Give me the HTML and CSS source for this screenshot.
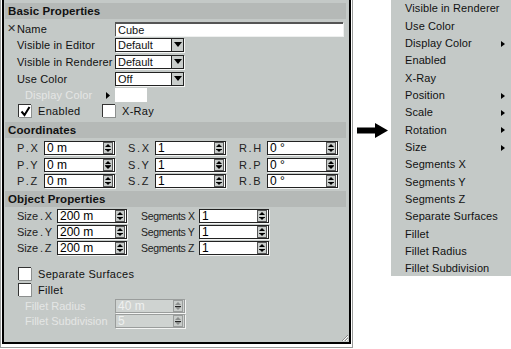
FILE: index.html
```html
<!DOCTYPE html>
<html>
<head>
<meta charset="utf-8">
<link rel="stylesheet" href="styles.css">
</head>
<body>
<div class="stage">
  <div class="frame">
    <div class="panel">
      <div class="band">Basic Properties</div>
      <div class="basic">
        <div class="lbl lbl-name"><span class="xmark">✕</span>Name</div>
        <div class="field name-field"><span class="ftxt">Cube</span></div>

        <div class="lbl">Visible in Editor</div>
        <div class="select"><span class="sel-val">Default</span><span class="sel-btn"><svg width="8" height="5" viewBox="0 0 8 5"><path d="M0 0H8L4 5Z" fill="#000"/></svg></span></div>

        <div class="lbl">Visible in Renderer</div>
        <div class="select"><span class="sel-val">Default</span><span class="sel-btn"><svg width="8" height="5" viewBox="0 0 8 5"><path d="M0 0H8L4 5Z" fill="#000"/></svg></span></div>

        <div class="lbl">Use Color</div>
        <div class="select"><span class="sel-val">Off</span><span class="sel-btn"><svg width="8" height="5" viewBox="0 0 8 5"><path d="M0 0H8L4 5Z" fill="#000"/></svg></span></div>

        <div class="lbl lbl-dim">Display Color<svg class="tri" width="4" height="7" viewBox="0 0 4 7"><path d="M0 0L4 3.5L0 7Z" fill="#000"/></svg></div>
        <div class="swatch"></div>

        <div class="checkrow">
          <span class="chk chk-a"><span class="cb"><svg width="11" height="11" viewBox="0 0 11 11"><path d="M1.5 5.5L4.5 9L9.5 1" fill="none" stroke="#000" stroke-width="2"/></svg></span>Enabled</span>
          <span class="chk"><span class="cb"></span>X-Ray</span>
        </div>
      </div>

      <div class="band band-2">Coordinates</div>
      <div class="coords">
        <div class="clbl">P . X</div><div class="num"><span class="nv">0 m</span><span class="spin"></span></div>
        <div class="clbl">S . X</div><div class="num"><span class="nv">1</span><span class="spin"></span></div>
        <div class="clbl">R . H</div><div class="num"><span class="nv">0 °</span><span class="spin"></span></div>

        <div class="clbl">P . Y</div><div class="num"><span class="nv">0 m</span><span class="spin"></span></div>
        <div class="clbl">S . Y</div><div class="num"><span class="nv">1</span><span class="spin"></span></div>
        <div class="clbl">R . P</div><div class="num"><span class="nv">0 °</span><span class="spin"></span></div>

        <div class="clbl">P . Z</div><div class="num"><span class="nv">0 m</span><span class="spin"></span></div>
        <div class="clbl">S . Z</div><div class="num"><span class="nv">1</span><span class="spin"></span></div>
        <div class="clbl">R . B</div><div class="num"><span class="nv">0 °</span><span class="spin"></span></div>
      </div>

      <div class="band band-3">Object Properties</div>
      <div class="objs">
        <div class="olbl">Size . X</div><div class="num num-o"><span class="nv">200 m</span><span class="spin"></span></div>
        <div class="olbl olbl-seg">Segments X</div><div class="num num-o"><span class="nv">1</span><span class="spin"></span></div>

        <div class="olbl">Size . Y</div><div class="num num-o"><span class="nv">200 m</span><span class="spin"></span></div>
        <div class="olbl olbl-seg">Segments Y</div><div class="num num-o"><span class="nv">1</span><span class="spin"></span></div>

        <div class="olbl">Size . Z</div><div class="num num-o"><span class="nv">200 m</span><span class="spin"></span></div>
        <div class="olbl olbl-seg">Segments Z</div><div class="num num-o"><span class="nv">1</span><span class="spin"></span></div>
      </div>

      <div class="opts">
        <div class="optrow"><span class="cb"></span>Separate Surfaces</div>
        <div class="optrow"><span class="cb"></span>Fillet</div>
      </div>
      <div class="fillet">
        <div class="lbl lbl-dim">Fillet Radius</div><div class="num num-dis"><span class="nv">40 m</span><span class="spin"></span></div>
        <div class="lbl lbl-dim">Fillet Subdivision</div><div class="num num-dis"><span class="nv">5</span><span class="spin"></span></div>
      </div>

      <svg class="grip" width="10" height="9" viewBox="0 0 10 9"><path d="M3 8L9 2M6 8L9 5" stroke="#888" stroke-width="1"/><path d="M4 8L9 3M7 8L9 6" stroke="#fff" stroke-width="1"/></svg>
    </div>
  </div>

  <div class="arrow-col">
    <svg width="31" height="15" viewBox="0 0 31 15"><path d="M0 4.5H18V0L31 7.5L18 15V10.5H0Z" fill="#000"/></svg>
  </div>

  <ul class="menu">
    <li>Visible in Renderer</li>
    <li>Use Color</li>
    <li class="sub">Display Color<i></i></li>
    <li>Enabled</li>
    <li>X-Ray</li>
    <li class="sub">Position<i></i></li>
    <li class="sub">Scale<i></i></li>
    <li class="sub">Rotation<i></i></li>
    <li class="sub">Size<i></i></li>
    <li>Segments X</li>
    <li>Segments Y</li>
    <li>Segments Z</li>
    <li>Separate Surfaces</li>
    <li>Fillet</li>
    <li>Fillet Radius</li>
    <li>Fillet Subdivision</li>
  </ul>
</div>
</body>
</html>
```

FILE: styles.css
```css
* { box-sizing: border-box; }
html, body { margin: 0; padding: 0; background: #fff; }
body {
  width: 511px;
  height: 349px;
  overflow: hidden;
  font-family: "Liberation Sans", Arial, sans-serif;
  font-size: 11px;
  color: #111;
}
.stage { display: flex; align-items: flex-start; }

.frame {
  width: 353px;
  height: 348px;
  border: 1px solid #9a9c9b;
  border-top: none;
  background: #fff;
  padding: 0 1px 3px 1px;
  flex: none;
}
.panel {
  position: relative;
  height: 100%;
  background: #c4c9c7;
  border: 2px solid #000;
  border-top: none;
  padding: 3px 3px 0 1px;
}

.band {
  height: 16px;
  background: #b5b9b7;
  font-weight: bold;
  font-size: 11.5px;
  letter-spacing: 0.1px;
  line-height: 16px;
  padding-left: 3px;
  color: #111;
  white-space: nowrap;
}
.band-2 { margin-top: 4px; }
.band-3 { margin-top: 1.5px; }

.basic {
  margin-top: 2px;
  padding-left: 2px;
  display: grid;
  grid-template-columns: 108px 1fr;
  grid-template-rows: 15px 17px 17px 17px 16px 15px;
  align-items: center;
}
.lbl {
  padding-left: 10px;
  font-size: 11px;
  letter-spacing: 0.15px;
  display: flex;
  align-items: center;
  white-space: nowrap;
}
.lbl-name { padding-left: 0; }
.xmark { font-size: 11px; color: #333; width: 10px; margin-right: 0; line-height: 1; }
.lbl-dim {
  padding-left: 18px;
  color: #e4e6e5;
  justify-content: space-between;
  padding-right: 5px;
}
.tri { display: block; }

.field {
  height: 14px;
  background: #fff;
  border-top: 2px solid #555;
  border-left: 1px solid #555;
  box-shadow: 1px 1px 0 #eef0ef;
  display: flex;
  align-items: center;
}
.name-field { width: 228px; }
.ftxt, .sel-val {
  font-size: 11px;
  padding-left: 2px;
  line-height: 12px;
  white-space: nowrap;
}

.select {
  width: 69px;
  height: 14px;
  background: #fff;
  border: 1px solid #222;
  box-shadow: 1px 1px 0 #f4f5f4;
  display: flex;
  align-items: center;
}
.sel-val { flex: 1; }
.sel-btn {
  width: 12px;
  height: 12px;
  background: #c9cdcb;
  border-left: 1px solid #222;
  display: flex;
  align-items: center;
  justify-content: center;
}

.swatch {
  width: 32px;
  height: 14px;
  background: #fff;
}

.checkrow {
  grid-column: 1 / 3;
  display: flex;
  align-items: center;
  padding-left: 11px;
  font-size: 11px;
  letter-spacing: 0.3px;
  white-space: nowrap;
}
.chk { display: flex; align-items: center; }
.chk-a { width: 84px; }
.cb {
  width: 13px;
  height: 13px;
  background: #fff;
  border-top: 1px solid #333;
  border-left: 1px solid #333;
  box-shadow: 1px 1px 0 #8c8f8e;
  margin-right: 7px;
  display: flex;
  align-items: center;
  justify-content: center;
  flex: none;
}

.coords {
  margin-top: 2px;
  padding-left: 12px;
  display: grid;
  grid-template-columns: 27px 71px 13px 27px 71px 13px 28px 71px;
  grid-template-rows: 16.5px 16.5px 16.5px;
  align-items: center;
}
.clbl, .olbl {
  font-size: 11px;
  color: #222;
  white-space: nowrap;
}
.clbl { word-spacing: -1px; letter-spacing: -0.2px; }
.olbl { word-spacing: -1px; letter-spacing: -0.1px; }
.olbl-seg { font-size: 10.5px; letter-spacing: -0.35px; word-spacing: 0; }
.coords > :nth-child(6n+3) { grid-column: 4; }
.coords > :nth-child(6n+4) { grid-column: 5; }
.coords > :nth-child(6n+5) { grid-column: 7; }
.coords > :nth-child(6n) { grid-column: 8; }

.num {
  width: 71px;
  height: 14px;
  background: #fff;
  border: 1px solid #222;
  box-shadow: 1px 1px 0 #f4f5f4;
  display: flex;
  align-items: center;
}
.nv {
  flex: 1;
  font-size: 12px;
  line-height: 12px;
  padding-left: 2px;
  color: #000;
  white-space: nowrap;
}
.spin {
  width: 10px;
  height: 12px;
  margin-right: 1px;
  background:
    linear-gradient(#222, #222) center 5.5px / 6px 1px no-repeat,
    #c9cdcb;
  border: 1px solid #555;
  position: relative;
}
.spin::before, .spin::after {
  content: "";
  position: absolute;
  left: 1px;
  border-left: 3px solid transparent;
  border-right: 3px solid transparent;
}
.spin::before { top: 1px; border-bottom: 3px solid #000; }
.spin::after { bottom: 1px; border-top: 3px solid #000; }

.objs {
  margin-top: 1px;
  padding-left: 12px;
  display: grid;
  grid-template-columns: 40px 70px 14px 58px 70px;
  grid-template-rows: 16px 16px 16px;
  align-items: center;
}
.objs > :nth-child(4n+3) { grid-column: 4; }
.objs > :nth-child(4n) { grid-column: 5; }
.num-o { width: 70px; }

.opts {
  margin-top: 9.5px;
  padding-left: 13px;
}
.optrow {
  height: 16px;
  display: flex;
  align-items: center;
  font-size: 11px;
  letter-spacing: 0.3px;
  white-space: nowrap;
}
.optrow .cb { margin-right: 7px; }

.fillet {
  margin-top: 0.5px;
  padding-left: 2px;
  display: grid;
  grid-template-columns: 108px 1fr;
  grid-template-rows: 15px 15px;
  align-items: center;
}
.fillet .lbl-dim { justify-content: flex-start; letter-spacing: 0; }
.num-dis {
  width: 70px;
  background: #cfd3d1;
  border-color: #9a9d9c;
}
.num-dis .nv { color: #eef0ef; }
.num-dis .spin { border-color: #9a9d9c; }
.num-dis .spin::before { border-bottom-color: #8a8d8c; }
.num-dis .spin::after { border-top-color: #8a8d8c; }

.grip {
  position: absolute;
  right: 0;
  bottom: 0;
}

.arrow-col {
  width: 38px;
  flex: none;
  padding-top: 123px;
  padding-left: 4px;
}
.arrow-col svg { display: block; }

.menu {
  list-style: none;
  margin: 0;
  padding: 0.3px 0 0 0;
  width: 120px;
  height: 276px;
  overflow: hidden;
  background: #c4c9c7;
  flex: none;
}
.menu li {
  height: 17.33px;
  line-height: 17.33px;
  padding: 0 6px 0 14px;
  font-size: 11px;
  letter-spacing: 0.1px;
  color: #111;
  display: flex;
  align-items: center;
  justify-content: space-between;
  white-space: nowrap;
}
.menu li i {
  width: 0;
  height: 0;
  border-top: 3.5px solid transparent;
  border-bottom: 3.5px solid transparent;
  border-left: 4px solid #000;
}
```
